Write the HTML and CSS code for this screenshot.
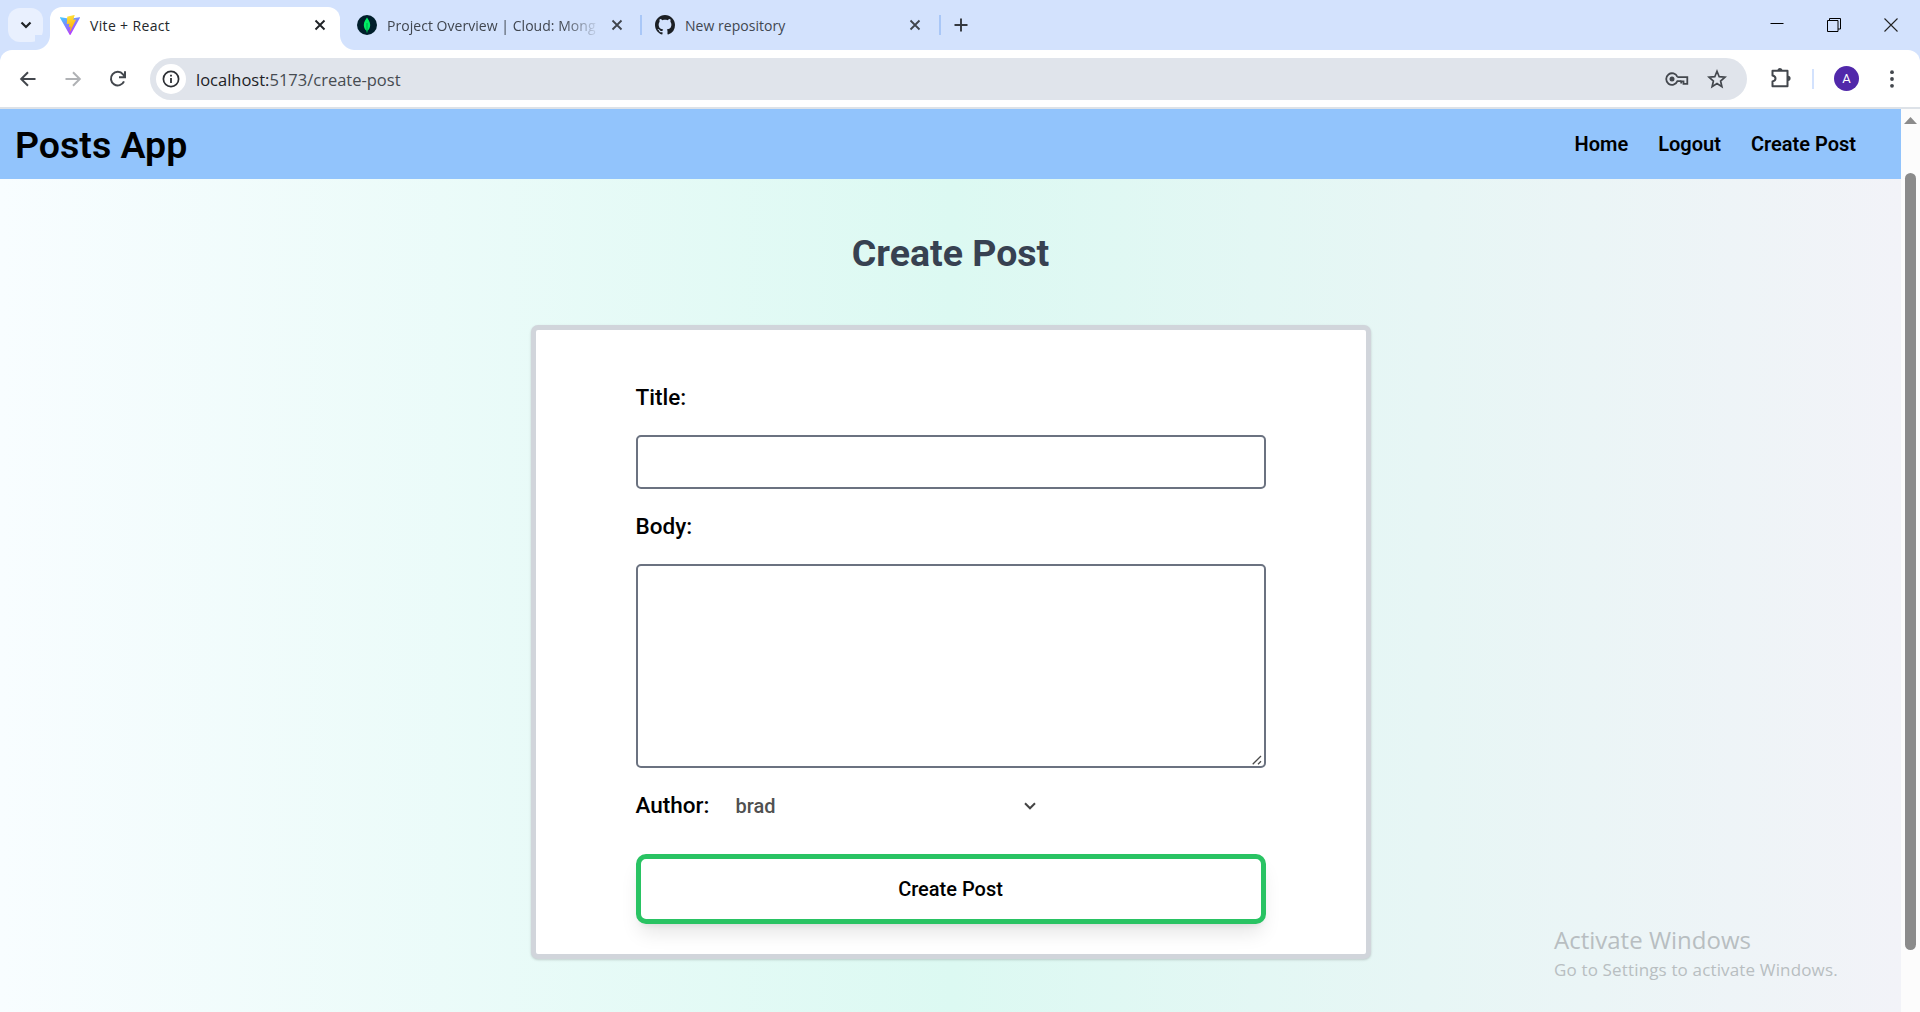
FILE: index.html
```html
<!DOCTYPE html>
<html lang="en">
<head>
<meta charset="utf-8">
<title>Vite + React</title>
<link rel="stylesheet" href="styles.css">
</head>
<body>
<div class="window">
  <div class="tabstrip">
    <div class="tab-search">
      <svg width="12" height="8" viewBox="0 0 12 8"><path d="M1.500 1.500 6 6l4.500-4.500" fill="none" stroke="#1f2226" stroke-width="2.200"/></svg>
    </div>
    <div class="tab tab-active">
      <svg class="favicon" width="20" height="20" viewBox="0 0 32 32">
        <defs>
          <linearGradient id="va" x1="0" y1="0" x2="0.600" y2="1"><stop offset="0" stop-color="#41d1ff"/><stop offset="1" stop-color="#bd34fe"/></linearGradient>
          <linearGradient id="vb" x1="0.400" y1="0" x2="0.600" y2="1"><stop offset="0" stop-color="#ffea83"/><stop offset="0.100" stop-color="#ffdd35"/><stop offset="1" stop-color="#ffa800"/></linearGradient>
        </defs>
        <path d="M31.800 4.700 16.900 31.400a.9.9 0 0 1-1.500 0L.2 4.700a.9.9 0 0 1 .9-1.300L16 6.100l14.900-2.700a.9.9 0 0 1 .9 1.300z" fill="url(#va)"/>
        <path d="M22.900 0 11.900 2.200a.4.4 0 0 0-.3.400l-.7 11.500a.4.4 0 0 0 .5.400l3.100-.7c.3 0 .5.200.5.500l-.9 4.500c0 .3.200.5.500.5l1.900-.6c.3 0 .6.200.5.500l-1.500 7c0 .5.500.7.700.3l9.400-18.700c.2-.3-.1-.7-.5-.6l-3.200.6a.4.4 0 0 1-.5-.5l2.100-7.300a.4.4 0 0 0-.5-.5z" fill="url(#vb)"/>
      </svg>
      <span class="tab-title">Vite + React</span>
      <svg class="tab-close" width="12" height="12" viewBox="0 0 12 12"><path d="m1.500 1.500 9 9m0-9-9 9" stroke="#1f2226" stroke-width="1.900"/></svg>
    </div>
    <div class="tab tab-mongo">
      <svg class="favicon" width="20" height="20" viewBox="0 0 20 20"><circle cx="10" cy="10" r="10" fill="#001e2b"/><path d="M10 2.500c.8 1.700 3.200 3.700 3.200 7.400 0 3-1.500 4.900-2.800 5.900l-.2 1.800h-.4l-.2-1.800c-1.300-1-2.800-2.900-2.800-5.900 0-3.700 2.400-5.700 3.200-7.400z" fill="#00ed64"/><path d="M10 8v9.500" stroke="#00883f" stroke-width=".7"/></svg>
      <span class="tab-title tab-title-fade">Project Overview | Cloud: Mong</span>
      <svg class="tab-close" width="12" height="12" viewBox="0 0 12 12"><path d="m1.500 1.500 9 9m0-9-9 9" stroke="#3f444c" stroke-width="1.800"/></svg>
    </div>
    <div class="tab-divider"></div>
    <div class="tab tab-github">
      <svg class="favicon" width="20" height="20" viewBox="0 0 16 16"><path fill="#1b1f24" d="M8 0C3.580 0 0 3.580 0 8c0 3.540 2.290 6.530 5.470 7.590.4.070.55-.17.55-.38 0-.19-.01-.82-.01-1.490-2.010.37-2.530-.49-2.690-.94-.09-.23-.48-.94-.82-1.130-.28-.15-.68-.52-.01-.53.63-.01 1.080.58 1.230.82.72 1.210 1.870.87 2.330.66.070-.52.28-.87.51-1.070-1.780-.2-3.640-.89-3.640-3.950 0-.87.31-1.590.82-2.150-.08-.2-.36-1.020.08-2.120 0 0 .67-.21 2.200.82.64-.18 1.320-.27 2-.27s1.360.09 2 .27c1.530-1.040 2.200-.82 2.200-.82.44 1.100.16 1.920.08 2.120.51.56.82 1.270.82 2.150 0 3.070-1.870 3.750-3.650 3.950.29.25.54.73.54 1.480 0 1.070-.01 1.930-.01 2.200 0 .21.15.46.55.38A8.010 8.010 0 0 0 16 8c0-4.420-3.580-8-8-8z"/></svg>
      <span class="tab-title">New repository</span>
      <svg class="tab-close" width="12" height="12" viewBox="0 0 12 12"><path d="m1.500 1.500 9 9m0-9-9 9" stroke="#3f444c" stroke-width="1.800"/></svg>
    </div>
    <div class="tab-divider"></div>
    <svg class="new-tab" width="14" height="14" viewBox="0 0 14 14"><path d="M7 .5v13M.5 7h13" stroke="#34383f" stroke-width="1.900"/></svg>
    <div class="window-controls">
      <svg width="14" height="14" viewBox="0 0 14 14"><path d="M.5 5.500h13" stroke="#000"/></svg>
      <svg width="14" height="14" viewBox="0 0 14 14"><path d="M.5 2.500h10.500v11H.5zM2.500 2.500V.5h11v10.500h-2.500" fill="none" stroke="#000"/></svg>
      <svg width="14" height="14" viewBox="0 0 14 14"><path d="m.5.5 13 13m0-13-13 13" stroke="#222" stroke-width="1.100"/></svg>
    </div>
  </div>

  <div class="toolbar">
    <div class="nav-buttons">
      <svg width="18" height="18" viewBox="0 0 18 18"><path d="M16.500 9H3M9 2.200 2.200 9 9 15.800" fill="none" stroke="#43474d" stroke-width="2"/></svg>
      <svg width="18" height="18" viewBox="0 0 18 18"><path d="M1.500 9H15M9 2.200 15.800 9 9 15.800" fill="none" stroke="#b0b2b5" stroke-width="2"/></svg>
      <svg width="18" height="18" viewBox="0 0 18 18"><path d="M15 11.300A6.800 6.800 0 1 1 14 4.300l1.700 2M16 1.200v6H10" fill="none" stroke="#43474d" stroke-width="2"/></svg>
    </div>
    <div class="omnibox">
      <span class="site-info"><svg width="18" height="18" viewBox="0 0 18 18"><circle cx="9" cy="9" r="7.600" fill="none" stroke="#2d3035" stroke-width="1.700"/><path d="M9 8v5M9 4.700v1.900" stroke="#2d3035" stroke-width="1.800"/></svg></span>
      <span class="url"><span class="host">localhost:</span>5173/create-post</span>
      <svg class="key" width="24" height="14" viewBox="0 0 24 14"><path d="M12.300 5.200h10v6.600h-3.800V9.300h-2.300v2.300" fill="none" stroke="#43474d" stroke-width="1.800"/><path d="M12.400 4.900a5.800 5.800 0 1 0 0 4.300h4" fill="none" stroke="#43474d" stroke-width="1.800"/><circle cx="7" cy="7" r="2.500" fill="#43474d"/></svg>
      <svg class="star" width="20" height="20" viewBox="0 0 20 20"><path d="m10 2.300 2.200 5.400 5.800.5-4.400 3.800 1.300 5.700-4.900-3.100-4.900 3.100L6.400 12 2 8.200l5.800-.5z" fill="none" stroke="#43474d" stroke-width="1.700"/></svg>
    </div>
    <svg class="extensions" width="20" height="20" viewBox="0 0 20 20"><path d="M1.500 2.800h15v15.400h-15v-4.700c4-1 4-5 0-6z" fill="none" stroke="#43474d" stroke-width="2" stroke-linejoin="round"/><path d="M6.500 2.500a2.500 2.500 0 0 1 5 0zM17 7.700a2.600 2.600 0 0 1 0 5.200z" fill="#43474d"/></svg>
    <div class="toolbar-divider"></div>
    <div class="avatar">A</div>
    <svg class="more" width="4" height="18" viewBox="0 0 4 18"><g fill="#43474d"><circle cx="2" cy="2.200" r="1.900"/><circle cx="2" cy="9" r="1.900"/><circle cx="2" cy="15.800" r="1.900"/></g></svg>
  </div>

  <div class="viewport">
    <div class="page">
      <header class="site-header">
        <div class="brand">Posts App</div>
        <nav class="links"><a>Home</a><a>Logout</a><a>Create Post</a></nav>
      </header>
      <main class="main">
        <h1 class="heading">Create Post</h1>
        <form class="card">
          <label class="label" for="title">Title:</label>
          <input class="field" id="title" type="text">
          <label class="label" for="body">Body:</label>
          <div class="field body-field" id="body">
            <svg class="grip" width="10" height="10" viewBox="0 0 10 10"><path d="M.7 9.300 9 1M6 9.300l3-3" stroke="#4a4a4a" stroke-width="1.300"/></svg>
          </div>
          <div class="author">
            <span class="label">Author:</span>
            <div class="select"><span>brad</span><svg width="12" height="8" viewBox="0 0 12 8"><path d="M1 1.300 6 6.300l5-5" fill="none" stroke="#444" stroke-width="2"/></svg></div>
          </div>
          <button class="submit" type="button">Create Post</button>
        </form>
      </main>
    </div>
    <div class="scrollbar">
      <svg width="13" height="7" viewBox="0 0 13 7"><path d="M6.500 0 13 7H0z" fill="#8b8b8b"/></svg>
      <div class="thumb"></div>
    </div>
  </div>
  <div class="watermark"><div class="watermark-title">Activate Windows</div><div class="watermark-text">Go to Settings to activate Windows.</div></div>
</div>
</body>
</html>
```
FILE: styles.css
```css
*{box-sizing:border-box}
body{margin:0;overflow:hidden}
svg{display:block;flex:none}
.window{position:relative;display:flex;flex-direction:column;width:1920px;height:1012px;background:#d3e2fd;font-family:Roboto,sans-serif;color:#000}

.tabstrip{display:flex;align-items:flex-start;height:50px;padding-left:8px;font-family:"Open Sans",sans-serif}
.tab-search{display:flex;align-items:center;justify-content:center;width:35px;height:34px;margin-top:8px;border-radius:12px;background:#e9f0fe}
.tab{display:flex;align-items:center;height:36px;margin-top:7px;font-size:14px;letter-spacing:.04px;color:#40464f}
.tab-active{position:relative;width:290px;height:43px;margin-left:7px;padding:0 14px 7px 10px;border-radius:12px 12px 0 0;background:#fff;color:#24272b;letter-spacing:.35px}
.tab-active::before,.tab-active::after{content:"";position:absolute;bottom:0;width:15px;height:15px}
.tab-active::before{left:-15px;background:radial-gradient(circle at 0 0,#d3e2fd 14.500px,#fff 15.500px)}
.tab-active::after{right:-15px;background:radial-gradient(circle at 100% 0,#d3e2fd 14.500px,#fff 15.500px)}
.tab-mongo{width:300px;padding:0 17px 0 17px}
.tab-github{width:297px;padding:0 18px 0 13px}
.tab-title{margin-left:10px;white-space:nowrap}
.tab-title-fade{-webkit-mask-image:linear-gradient(to right,#000 84%,transparent 102%);mask-image:linear-gradient(to right,#000 84%,transparent 102%)}
.tab-close{margin-left:auto}
.tab-divider{width:2px;height:20px;margin-top:15px;background:#a9c7f7}
.new-tab{margin:18px 0 0 13px}
.window-controls{display:flex;gap:43px;margin:18px 22px 0 auto}

.toolbar{display:flex;align-items:center;height:59px;padding-left:19px;border-bottom:2px solid #dde2e8;border-radius:12px 12px 0 0;background:#fff}
.nav-buttons{display:flex;gap:27px}
.omnibox{display:flex;align-items:center;width:1597px;height:42px;margin-left:23px;padding:0 20px 0 6px;border-radius:21px;background:#e0e4eb}
.site-info{display:flex;align-items:center;justify-content:center;width:30px;height:30px;border-radius:50%;background:#fff}
.url{margin:2px 0 0 10px;font:16.500px/24px "Open Sans",sans-serif;color:#464b51}
.host{color:#202226}
.key{margin-left:auto}
.star{margin-left:18px}
.extensions{margin:-2px 0 0 24px}
.toolbar-divider{width:2px;height:20px;margin-left:21px;background:#d3e2fd}
.avatar{width:25px;height:25px;margin-left:20px;border-radius:50%;background:#5128aa;color:#fff;font-size:13px;line-height:26px;text-align:center}
.more{margin-left:31px}

.viewport{display:flex;flex:1;min-height:0}
.page{display:flex;flex-direction:column;width:1901px;background:linear-gradient(to right,#f8fdff,#dcf9f2 50%,#f2f3f8)}
.site-header{display:flex;align-items:center;justify-content:space-between;height:70px;padding:0 45px 0 15px;background:#92c4fc}
.brand{padding-top:1px;font-size:37.500px;font-weight:600;line-height:50px}
.links{display:flex;gap:30px;font-size:20px;font-weight:600;line-height:30px}
.main{display:flex;flex-direction:column;align-items:center;padding-top:49px}
.heading{margin:0;font-size:37.500px;font-weight:700;line-height:50px;color:#374151}
.card{display:flex;flex-direction:column;width:840px;height:634px;margin-top:47px;padding:50px 100px 0;border:5px solid #d1d5db;border-radius:7px;background:#fff;box-shadow:0 1px 3px rgba(0,0,0,.1),0 1px 2px rgba(0,0,0,.08)}
.label{height:35px;font-size:22.500px;font-weight:500;line-height:35px}
.field{width:630px;height:54px;margin:20px 0;padding:0 10px;border:2px solid #6b7280;border-radius:5px;background:#fff;outline:0;flex:none}
.body-field{display:flex;align-items:flex-end;justify-content:flex-end;height:204px;padding:0 2px 1px 0}
.author{display:flex;align-items:center;height:35px}
.select{display:flex;align-items:center;justify-content:space-between;width:301px;margin-left:26px;font-size:20px;font-weight:500;line-height:30px;color:#505050}
.submit{flex:none;height:70px;margin-top:31px;border:5px solid #29c363;border-radius:10px;background:#fff;box-shadow:0 12.500px 18.750px -3.750px rgba(0,0,0,.1),0 5px 7.500px -5px rgba(0,0,0,.1);color:#000;font:500 20px/30px Roboto,sans-serif}
.scrollbar{display:flex;flex-direction:column;align-items:center;width:19px;padding:8px 0 0;background:#fcfcfc}
.thumb{width:11px;height:777px;margin-top:49px;border-radius:6px;background:#8b8b8b}

.watermark{position:absolute;left:1554px;top:924px;font-family:"Open Sans",sans-serif;color:#b8bec1;white-space:nowrap}
.watermark-title{font-size:24px;line-height:32px}
.watermark-text{font-size:17px;line-height:28px;letter-spacing:.15px}
```
